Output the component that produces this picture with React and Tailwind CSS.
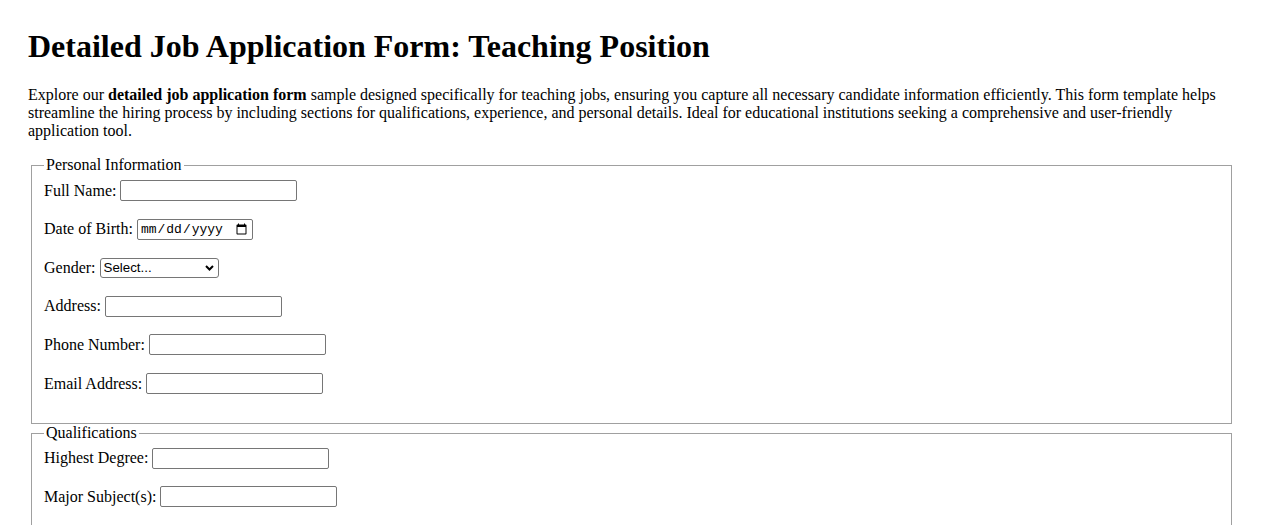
import React from "react";

const inputCls =
  "w-[177px] h-[21px] border border-[#767676] rounded-[2px] bg-white px-[2px] py-[1px] text-[13.33px] font-['Liberation_Sans',Arial,sans-serif] leading-[normal]";

function Row({ label, children }) {
  return (
    <div className="flex items-center h-[21px] mb-[17.6px] whitespace-nowrap">
      <label>{label}</label>
      <span className="ml-[4px] flex">{children}</span>
    </div>
  );
}

function Section({ title, children }) {
  return (
    <fieldset className="mx-[3px] border border-[#a0a0a0] pl-[12px] pr-[12px] pt-[5.6px] pb-[11.6px]">
      <legend className="px-[2px]">{title}</legend>
      {children}
    </fieldset>
  );
}

export default function App() {
  return (
    <div className="min-h-screen bg-white text-black font-['Liberation_Serif','Times_New_Roman',serif] text-[16px] leading-[normal] px-[28px] pt-[28px] pb-[28px]">
      <h1 className="text-[32px] font-bold leading-[normal] mb-[21.44px]">
        Detailed Job Application Form: Teaching Position
      </h1>
      <p className="mb-[16px]">
        Explore our <strong>detailed job application form</strong> sample designed specifically for
        teaching jobs, ensuring you capture all necessary candidate information efficiently. This
        form template helps streamline the hiring process by including sections for qualifications,
        experience, and personal details. Ideal for educational institutions seeking a comprehensive
        and user-friendly application tool.
      </p>

      <form>
        <Section title="Personal Information">
          <Row label="Full Name:">
            <input type="text" className={inputCls} />
          </Row>
          <Row label="Date of Birth:">
            <input
              type="date"
              className="w-[116px] h-[21px] border border-[#767676] rounded-[2px] bg-white pl-[2px] pr-[2px] text-[13px] font-['Liberation_Mono',monospace] leading-[normal]"
            />
          </Row>
          <Row label="Gender:">
            <span className="relative flex">
              <select
                defaultValue=""
                className="appearance-none w-[119px] h-[20px] border border-[#767676] rounded-[3px] bg-white pl-[3px] pr-[16px] text-[13.33px] font-['Liberation_Sans',Arial,sans-serif] leading-[normal]"
              >
                <option value="">Select...</option>
                <option value="female">Female</option>
                <option value="male">Male</option>
                <option value="other">Other</option>
              </select>
              <svg
                className="absolute right-[5px] top-[7px] pointer-events-none"
                width="9"
                height="6"
                viewBox="0 0 9 6"
                fill="none"
              >
                <path d="M1 1L4.5 4.5L8 1" stroke="#000" strokeWidth="2" />
              </svg>
            </span>
          </Row>
          <Row label="Address:">
            <input type="text" className={inputCls} />
          </Row>
          <Row label="Phone Number:">
            <input type="tel" className={inputCls} />
          </Row>
          <Row label="Email Address:">
            <input type="email" className={inputCls} />
          </Row>
        </Section>

        <Section title="Qualifications">
          <Row label="Highest Degree:">
            <input type="text" className={inputCls} />
          </Row>
          <Row label="Major Subject(s):">
            <input type="text" className={inputCls} />
          </Row>
        </Section>
      </form>
    </div>
  );
}
